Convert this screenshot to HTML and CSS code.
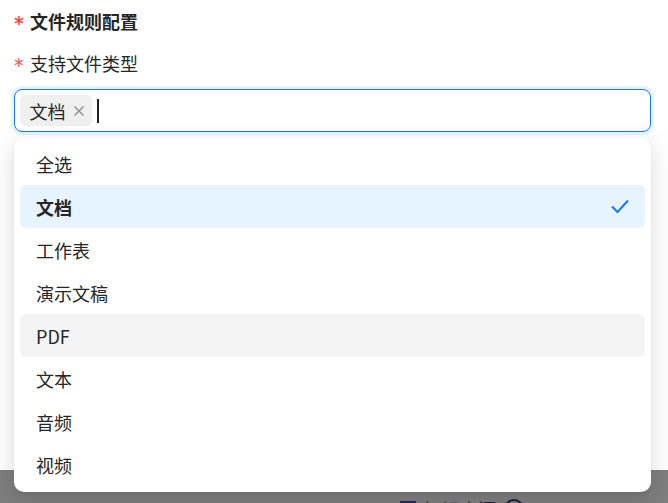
FILE: index.html
```html
<!DOCTYPE html>
<html lang="zh-CN">
<head>
<meta charset="utf-8">
<title>文件规则配置</title>
<link rel="stylesheet" href="styles.css">
</head>
<body>
<div class="modal">
  <div class="title"><span class="req req-bold">*</span>文件规则配置</div>
  <div class="label"><span class="req">*</span>支持文件类型</div>
  <div class="select">
    <span class="tag">文档<svg class="tag-close" width="12" height="12" viewBox="0 0 12 12"><path d="M1.5 1.5 L10.5 10.5 M10.5 1.5 L1.5 10.5" stroke="#8c8c8c" stroke-width="1.4" fill="none"/></svg></span>
    <span class="cursor"></span>
  </div>
</div>
<div class="mask">
  <div class="behind"><span class="behind-icon"></span>知识来源 <span class="behind-q">?</span></div>
</div>
<div class="dropdown">
  <div class="opt">全选</div>
  <div class="opt selected">文档
    <svg class="check" width="18" height="15" viewBox="0 0 18 15"><path d="M1 7.5 L6.5 13 L17 1.5" fill="none" stroke="#1677ff" stroke-width="2"/></svg>
  </div>
  <div class="opt">工作表</div>
  <div class="opt">演示文稿</div>
  <div class="opt hover">PDF</div>
  <div class="opt">文本</div>
  <div class="opt">音频</div>
  <div class="opt">视频</div>
</div>
</body>
</html>
```
FILE: styles.css
```css
html, body {
  margin: 0;
  padding: 0;
  height: 503px;
  overflow: hidden;
  background: #fff;
  font-family: "Noto Sans CJK SC", "Noto Sans", sans-serif;
  color: #262626;
}
.modal {
  box-sizing: border-box;
  height: 470px;
  padding: 8px 17px 0 14px;
  background: #fff;
}
.title, .label {
  display: flex;
  align-items: center;
  height: 26px;
  font-size: 18px;
  line-height: 26px;
}
.title { font-weight: 700; }
.label { margin-top: 16px; }
.req {
  color: #ff4d4f;
  font-family: "DejaVu Sans", sans-serif;
  font-weight: 400;
  font-size: 19px;
  width: 16px;
  margin-top: 3px;
}
.req-bold { font-weight: 700; }
.select {
  margin-top: 13px;
  box-sizing: border-box;
  height: 43px;
  border: 1.5px solid #1677ff;
  border-radius: 8px;
  box-shadow: 0 0 0 3px rgba(5, 145, 255, 0.1);
  display: flex;
  align-items: center;
  padding: 0 4.5px;
}
.tag {
  display: flex;
  align-items: center;
  height: 31px;
  padding: 0 7px 0 10px;
  background: #f0f0f0;
  border-radius: 6px;
  font-size: 18px;
  color: #262626;
}
.tag-close {
  margin-left: 7px;
  margin-top: 1px;
}
.cursor {
  width: 2px;
  height: 24px;
  background: #1f1f1f;
  margin-left: 5px;
}
.mask {
  height: 33px;
  background: #7f7f7f;
  overflow: hidden;
  position: relative;
}
.behind {
  position: absolute;
  left: 400px;
  top: 26px;
  display: flex;
  align-items: center;
  gap: 8px;
  font-size: 18px;
  color: #1b2238;
}
.behind-icon {
  width: 16px;
  height: 16px;
  background: #1c2b6b;
}
.behind-q {
  width: 16px;
  height: 16px;
  border: 2px solid #1b2238;
  border-radius: 50%;
  font-size: 12px;
}
.dropdown {
  position: absolute;
  left: 14px;
  top: 138px;
  width: 637px;
  height: 354px;
  box-sizing: border-box;
  padding: 4px 6px 6px;
  background: #fff;
  border-radius: 10px;
  box-shadow: 0 6px 16px 0 rgba(0,0,0,0.08), 0 3px 6px -4px rgba(0,0,0,0.12), 0 9px 28px 8px rgba(0,0,0,0.05);
}
.opt {
  height: 43px;
  display: flex;
  align-items: center;
  justify-content: space-between;
  padding: 0 16px;
  font-size: 18px;
  border-radius: 6px;
  color: #262626;
}
.opt.selected {
  background: #e6f4ff;
  font-weight: 700;
}
.opt.hover {
  background: #f4f4f4;
}
```
